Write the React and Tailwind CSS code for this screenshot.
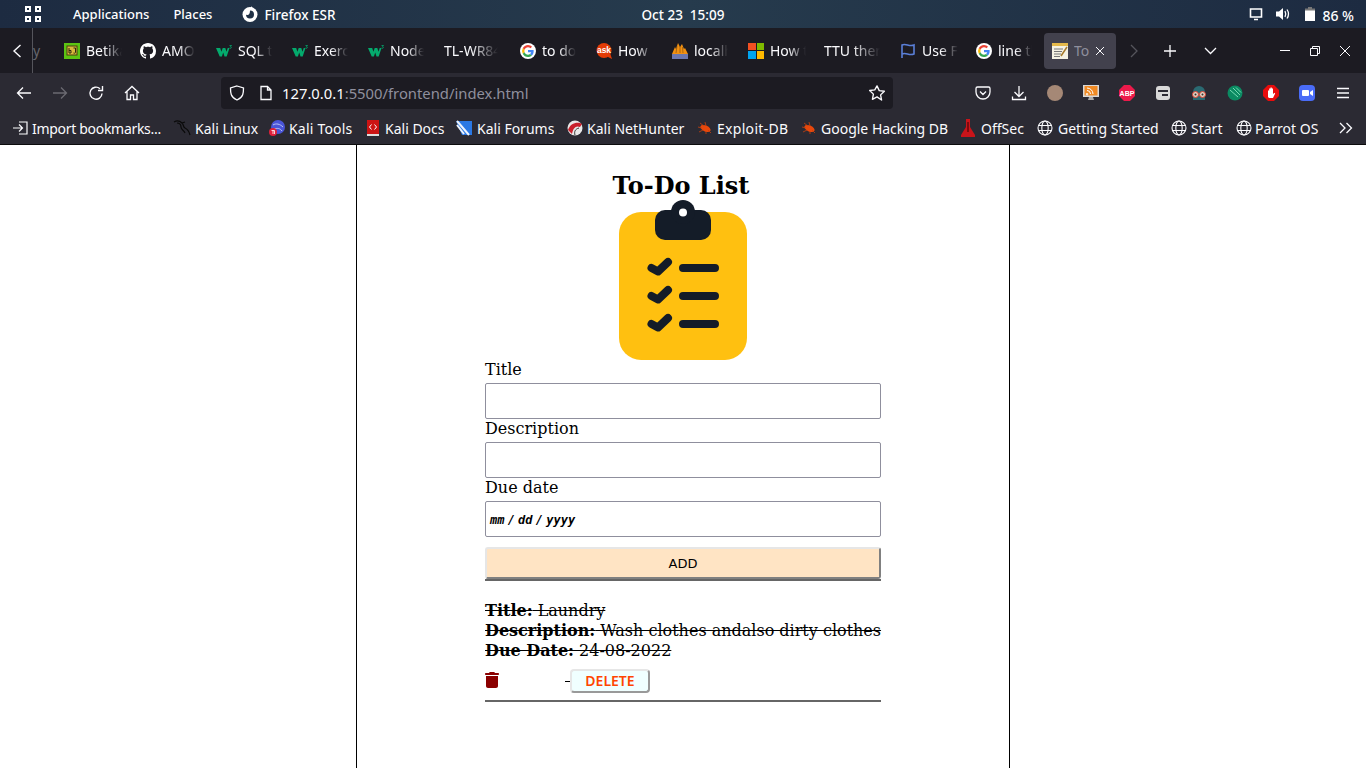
import React from "react";

const G = () => (
  <svg width="16" height="16" viewBox="0 0 48 48" className="shrink-0">
    <circle cx="24" cy="24" r="24" fill="#fff" />
    <path fill="#EA4335" d="M24 13c3 0 5.300 1 7.200 2.800l4.800-4.800C33 8.200 28.900 6 24 6 17 6 11 10 8.200 16l5.600 4.300C15.200 16 19.200 13 24 13z" />
    <path fill="#4285F4" d="M41 24.500c0-1.300-.1-2.300-.3-3.500H24v6.700h9.600c-.4 2.300-1.700 4.200-3.700 5.500l5.500 4.300C38.900 34 41 29.700 41 24.500z" />
    <path fill="#FBBC05" d="M13.800 27.700a10.800 10.800 0 0 1 0-7.400L8.200 16a18 18 0 0 0 0 16z" />
    <path fill="#34A853" d="M24 42c4.900 0 8.900-1.600 11.400-4.500l-5.500-4.300c-1.500 1-3.400 1.800-5.900 1.800-4.800 0-8.800-3-10.200-7.300L8.200 32C11 38 17 42 24 42z" />
  </svg>
);
const W3 = () => (
  <svg width="16" height="12" viewBox="0 0 16 12" className="shrink-0">
    <path fill="#04AA6D" d="M0 3h4.200l1.200 3.800L6.700 3h2.600l1.200 3.800L11.700 3H13.500l-2.800 8.500H8.500L7.200 7.500 5.900 11.500H3.700z" />
    <path fill="none" stroke="#04AA6D" strokeWidth=".8" d="M13.500.5H15.500L14.500 1.800c1 0 1.200 1.200 0 1.500-.5 0-1-.2-1-.5" />
  </svg>
);
const Github = () => (
  <svg width="16" height="16" viewBox="0 0 16 16" fill="#fff" className="shrink-0">
    <path d="M8 0C3.580 0 0 3.580 0 8c0 3.540 2.290 6.530 5.470 7.590.4.070.55-.17.55-.38 0-.19-.01-.82-.01-1.490-2.010.37-2.530-.49-2.690-.94-.09-.23-.48-.94-.82-1.130-.28-.15-.68-.52-.01-.53.63-.01 1.080.58 1.230.82.72 1.210 1.870.87 2.330.66.070-.52.28-.87.510-1.070-1.780-.2-3.640-.89-3.640-3.950 0-.87.310-1.590.82-2.150-.08-.2-.36-1.020.08-2.120 0 0 .67-.21 2.200.82.64-.18 1.320-.27 2-.27s1.360.09 2 .27c1.530-1.040 2.200-.82 2.200-.82.44 1.100.16 1.920.08 2.120.51.560.82 1.270.82 2.150 0 3.070-1.870 3.750-3.650 3.950.290.25.540.73.540 1.480 0 1.070-.01 1.930-.01 2.200 0 .210.15.460.55.380A8.010 8.010 0 0 0 16 8c0-4.420-3.580-8-8-8z" />
  </svg>
);
const Boot = () => (
  <svg width="16" height="16" viewBox="0 0 16 16" className="shrink-0">
    <rect width="16" height="16" fill="#5cc412" />
    <rect x="3" y="3" width="10" height="9" fill="#d9b93c" stroke="#4a3d10" />
    <path d="M5 5v5h2V7.500H5M9.500 5h2v4.500c0 .8-1 .8-2 .5" stroke="#2d2a10" fill="none" />
  </svg>
);
const Ask = () => (
  <svg width="16" height="16" viewBox="0 0 16 16" className="shrink-0">
    <circle cx="8" cy="7.500" r="7.500" fill="#e33c06" />
    <path fill="#e33c06" d="M10 13l6 3-2-6z" />
    <text x="8" y="10" textAnchor="middle" fontSize="8.500" fontWeight="700" fill="#fff" fontFamily="Liberation Sans">ask</text>
  </svg>
);
const Pma = () => (
  <svg width="16" height="16" viewBox="0 0 16 16" className="shrink-0">
    <path fill="#f29111" d="M0 11 3 4l1 2 2-6 2 4 2-3 2 5 1-1 3 6z" />
    <path stroke="#7a4a10" strokeWidth=".6" d="M4 10 5 3M8 10V3M11 10 10.500 4" />
    <path fill="#6c78af" d="M0 11h16v5H0z" />
  </svg>
);
const Ms = () => (
  <span className="w-4 h-4 shrink-0 grid grid-cols-2 gap-px">
    <span className="bg-[#f25022]" />
    <span className="bg-[#7fba00]" />
    <span className="bg-[#00a4ef]" />
    <span className="bg-[#ffb900]" />
  </span>
);
const Flag = () => (
  <svg width="16" height="16" viewBox="0 0 16 16" fill="none" stroke="#5a7fd8" strokeWidth="1.600" className="shrink-0">
    <path d="M2 15V2c4-2 7 2 12 0v9c-5 2-8-2-12 0" />
  </svg>
);
const Note = () => (
  <svg width="16" height="16" viewBox="0 0 16 16" className="shrink-0">
    <rect width="16" height="16" fill="#f5f2e3" />
    <rect width="16" height="3" fill="#e5b94a" />
    <path stroke="#777" d="M2 6h9M2 8.500h8M2 11h7M2 13.500h6" />
    <path stroke="#a77b2c" strokeWidth="1.500" d="M15 4l-6 9" />
  </svg>
);

const Tab = ({ icon, label, width = "w-[36px]", gap = "gap-[6px]" }) => (
  <div className={`w-[76px] shrink-0 flex items-center ${gap} text-[14px] text-[#fbfbfe] overflow-hidden`}>
    {icon}
    <span className={`${width} overflow-hidden whitespace-nowrap [mask-image:linear-gradient(to_right,#000_50%,transparent)]`}>{label}</span>
  </div>
);

const Globe = () => (
  <svg width="16" height="16" viewBox="0 0 16 16" fill="none" stroke="#fbfbfe" strokeWidth="1.100" className="shrink-0">
    <circle cx="8" cy="8" r="7" />
    <ellipse cx="8" cy="8" rx="3.200" ry="7" />
    <path d="M1.500 5.500h13M1.500 10.500h13" />
  </svg>
);
const Dragon = () => (
  <svg width="18" height="16" viewBox="0 0 18 16" fill="none" stroke="#0a0a0a" strokeWidth="1.200" className="shrink-0">
    <path d="M1 2c3-2 6-1 8 1s1 4 3 5 4 3 5 7M4 3c2 0 4 1 4 4s3 3 4 6M9 3l3-1" />
  </svg>
);
const KaliTools = () => (
  <svg width="16" height="16" viewBox="0 0 16 16" className="shrink-0">
    <circle cx="9" cy="7" r="7" fill="#4a55d8" />
    <path d="M4 5c3-2 7-1 10 2M5 9c3-1 6-1 8 2" stroke="#b9c3f5" fill="none" />
    <circle cx="4" cy="12" r="4" fill="#e0203a" />
    <path d="M2.500 10.500h3v3.500M4 10.500V14" stroke="#fff" strokeWidth=".8" fill="none" />
  </svg>
);
const KaliDocs = () => (
  <svg width="14" height="16" viewBox="0 0 14 16" className="shrink-0">
    <rect x="1" width="12" height="14" fill="#cc1414" />
    <rect x="1" y="14" width="12" height="2" fill="#ddd" />
    <path d="M5.500 4.500 3.500 7l2 2.500M8.500 4.500l2 2.500-2 2.500" stroke="#fff" fill="none" />
  </svg>
);
const KaliForums = () => (
  <svg width="16" height="16" viewBox="0 0 16 16" className="shrink-0">
    <path d="M0 1h16v14H6z" fill="#2a78e4" />
    <path d="M1 1 13 15M1 5l7 9" stroke="#eef3fb" strokeWidth="2" />
  </svg>
);
const NetHunter = () => (
  <svg width="16" height="16" viewBox="0 0 16 16" className="shrink-0">
    <circle cx="8" cy="8" r="7.500" fill="#e8e8e8" />
    <path d="M1 10C3 3 11 1 15 4l-2 3C9 5 6 8 5 14z" fill="#c8202c" />
    <path d="M8 15c-1-3 0-6 4-7" stroke="#333" fill="none" />
  </svg>
);
const Bug = () => (
  <svg width="16" height="14" viewBox="0 0 16 14" className="shrink-0">
    <ellipse cx="8.500" cy="7.500" rx="5.500" ry="3" fill="#e8480c" transform="rotate(25 8.500 7.500)" />
    <path d="M1 6l4 1M3 2l4 3M8 1l1 4M2 11l4-2M14 12l-3-3M9 13l0-3" stroke="#c8400c" strokeWidth=".8" />
  </svg>
);
const OffSec = () => (
  <svg width="14" height="18" viewBox="0 0 14 18" className="shrink-0">
    <path d="M5 0h4v8l5 8v2H0v-2l5-8z" fill="#c9141a" />
    <path d="M6.500 3h1v10h-1z" fill="#300" />
  </svg>
);

const Bookmark = ({ icon, label, box, w, track = "" }) => (
  <div className={`flex items-center shrink-0 text-[14px] text-[#fbfbfe] whitespace-nowrap ${w}`}>
    <span className={`${box} shrink-0 flex items-center`}>{icon}</span>
    <span className={track}>{label}</span>
  </div>
);

const Clipboard = () => (
  <svg width="150" height="160" viewBox="0 0 150 160" className="block">
    <rect x="11" y="12" width="128" height="148" rx="22" fill="#ffc010" />
    <rect x="47" y="10" width="56" height="30" rx="10" fill="#141c28" />
    <circle cx="75" cy="12" r="12" fill="#141c28" />
    <circle cx="75" cy="12.500" r="4" fill="#fff" />
    <g fill="none" stroke="#141c28" strokeLinecap="round" strokeLinejoin="round" strokeWidth="8">
      <path d="M43.500 68 50 71.500 60 62" />
      <path d="M43.500 96 50 99.500 60 90" />
      <path d="M43.500 124 50 127.500 60 118" />
      <path d="M75 68h32M75 96h32M75 124h32" />
    </g>
  </svg>
);

const Label = ({ children }) => <div className="h-[19px] leading-[19px] mb-[4px]">{children}</div>;
const Field = ({ children }) => (
  <div className="h-[36px] border border-[#8f8f9d] rounded-[2px] bg-white flex items-center px-[4px]">{children}</div>
);

export default function App() {
  return (
    <div className="w-[1366px] h-[768px] overflow-hidden bg-white flex flex-col font-['Noto_Sans',sans-serif]">
      {/* desktop panel */}
      <div className="h-[28px] shrink-0 pt-[2px] bg-gradient-to-r from-[#1d2b41] via-[#263b4d] to-[#1d2b41] flex items-center text-white text-[13.5px] font-medium">
        <div className="ml-[25px] w-4 h-4 grid grid-cols-2 gap-[4px] mt-[-2px]">
          <span className="border-2 border-white" />
          <span className="border-2 border-white" />
          <span className="border-2 border-white" />
          <span className="border-2 border-white" />
        </div>
        <span className="ml-[32px] text-[13px]">Applications</span>
        <span className="ml-[24px] text-[13px]">Places</span>
        <svg width="16" height="16" viewBox="0 0 16 16" className="ml-[30px] mt-[-2px]">
          <circle cx="8" cy="8.500" r="7.500" fill="#fff" />
          <path d="M8 4.500a4 4 0 1 1-4 4C6 10 8 8.500 8 4.500z" fill="#1f3045" />
          <path d="M9 0c1 2 3 3 4 4L9 4z" fill="#fff" />
        </svg>
        <span className="ml-[6px]">Firefox ESR</span>
        <span className="ml-[306px] whitespace-pre">Oct 23  15:09</span>
        <div className="ml-auto flex items-center">
          <svg width="14" height="14" viewBox="0 0 14 14" fill="none" stroke="#fff" strokeWidth="2" className="mt-[-2px]">
            <path d="M1.500 2h11v8h-11zM5 12.500h4" strokeWidth="1.600" />
          </svg>
          <svg width="16" height="16" viewBox="0 0 16 16" className="ml-[12px] mt-[-2px]">
            <path d="M1 5.500h3L8 2v12L4 10.500H1z" fill="#fff" />
            <path d="M10 5c1 2 1 4 0 6M12 3.500c2 3 2 6 0 9" stroke="#fff" fill="none" strokeWidth="1.300" />
          </svg>
          <svg width="10" height="14" viewBox="0 0 10 14" className="ml-[14px] mt-[-2px]">
            <path d="M3 0h4v1.500h3V14H0V1.500h3z" fill="#777" />
            <path d="M0 3.500h10V14H0z" fill="#fff" />
          </svg>
          <span className="ml-[7px] mr-[12px] text-[14px]">86 %</span>
        </div>
      </div>

      {/* tabs */}
      <div className="h-[45px] shrink-0 bg-[#1c1b22] flex items-center">
        <div className="w-[33px] h-full shrink-0 flex items-center border-r border-[#55555c]">
          <svg width="10" height="14" viewBox="0 0 10 14" fill="none" stroke="#fbfbfe" strokeWidth="1.400" className="ml-[12px]">
            <path d="M8.500 1 2 7l6.500 6" />
          </svg>
        </div>
        <span className="w-[31px] text-[14px] text-[#66666c] shrink-0">y</span>
        <div className="flex items-center">
          <Tab icon={<Boot />} label="Betika" />
          <Tab icon={<Github />} label="AMO" width="w-[33px]" />
          <Tab icon={<W3 />} label="SQL tutorial" width="w-[34px]" />
          <Tab icon={<W3 />} label="Exercise" width="w-[34px]" />
          <Tab icon={<W3 />} label="Node" width="w-[34px]" />
          <Tab icon={null} label="TL-WR841" width="w-[54px]" gap="gap-0" />
          <Tab icon={<G />} label="to do" width="w-[34px]" />
          <Tab icon={<Ask />} label="How" />
          <Tab icon={<Pma />} label="localhost" width="w-[34px]" />
          <Tab icon={<Ms />} label="How to" />
          <Tab icon={null} label="TTU there" width="w-[56px]" gap="gap-0" />
          <Tab icon={<Flag />} label="Use Font" />
          <Tab icon={<G />} label="line through" width="w-[34px]" />
        </div>
        <div className="ml-[-8px] w-[72px] h-[36px] bg-[#42414d] rounded-[4px] flex items-center pl-[8px] shrink-0 text-[14px] text-[#8f8f9d]">
          <Note />
          <span className="ml-[6px] w-[16px] overflow-hidden">To</span>
          <svg width="10" height="10" viewBox="0 0 10 10" stroke="#fbfbfe" className="ml-[5px]"><path d="M1 1l8 8M9 1l-8 8" /></svg>
        </div>
        <svg width="8" height="14" viewBox="0 0 8 14" fill="none" stroke="#55555c" strokeWidth="1.300" className="ml-[14px]"><path d="M1 1l6 6-6 6" /></svg>
        <svg width="12" height="12" viewBox="0 0 12 12" stroke="#fbfbfe" strokeWidth="1.300" className="ml-[26px]"><path d="M6 0v12M0 6h12" /></svg>
        <svg width="13" height="8" viewBox="0 0 13 8" fill="none" stroke="#fbfbfe" strokeWidth="1.300" className="ml-[28px]"><path d="M1 1l5.500 5.500L12 1" /></svg>
        <div className="ml-auto flex items-center">
          <span className="w-[10px] h-px bg-[#fbfbfe]" />
          <svg width="10" height="10" viewBox="0 0 10 10" fill="none" stroke="#fbfbfe" className="ml-[20px]"><path d="M.5 2.500h7v7h-7zM2.500 2.500v-2h7v7h-2" /></svg>
          <svg width="10" height="10" viewBox="0 0 10 10" stroke="#fbfbfe" className="ml-[20px] mr-[16px]"><path d="M0 0l10 10M10 0 0 10" /></svg>
        </div>
      </div>

      {/* nav */}
      <div className="h-[40px] shrink-0 bg-[#2b2a33] flex items-center">
        <svg width="16" height="16" viewBox="0 0 16 16" fill="none" stroke="#fbfbfe" strokeWidth="1.300" className="ml-[16px]"><path d="M15 8H1.500M7 2.500 1.500 8 7 13.500" /></svg>
        <svg width="16" height="16" viewBox="0 0 16 16" fill="none" stroke="#6b6a72" strokeWidth="1.300" className="ml-[20px]"><path d="M1 8h13.500M9 2.500 14.500 8 9 13.500" /></svg>
        <svg width="16" height="16" viewBox="0 0 16 16" fill="none" stroke="#fbfbfe" strokeWidth="1.400" className="ml-[20px]"><path d="M14 8.500A6 6 0 1 1 12 3.700M10 5.500h4.500V1" /></svg>
        <svg width="16" height="16" viewBox="0 0 16 16" fill="none" stroke="#fbfbfe" strokeWidth="1.300" className="ml-[20px]"><path d="M1 8 8 1.500 15 8M3 6.500V14.500h3.500V10h3v4.500H13V6.500" /></svg>
        <div className="ml-[81px] w-[672px] h-[32px] rounded-[4px] bg-[#1c1b22] flex items-center text-[14.8px] shrink-0">
          <svg width="16" height="16" viewBox="0 0 16 16" fill="none" stroke="#fbfbfe" strokeWidth="1.300" className="ml-[8px]"><path d="M8 1 14.500 3c0 5 0 9-6.500 12C1.500 12 1.500 8 1.500 3z" /></svg>
          <svg width="14" height="16" viewBox="0 0 14 16" fill="none" stroke="#fbfbfe" strokeWidth="1.300" className="ml-[14px]"><path d="M2 1.500h6.500L12 5v9.500H2zM8.500 1.500V5H12" /></svg>
          <span className="ml-[9px] text-[#fbfbfe]">127.0.0.1<span className="text-[#8f8f9d]">:5500/frontend/index.html</span></span>
          <svg width="18" height="18" viewBox="0 0 24 24" fill="none" stroke="#fbfbfe" strokeWidth="1.800" strokeLinejoin="round" className="ml-auto mr-[7px]"><path d="M12 2.500l3 6.300 6.800.9-5 4.800 1.300 6.900L12 17.100l-6.100 3.300 1.300-6.900-5-4.800 6.800-.9z" /></svg>
        </div>
        <div className="ml-[82px] flex items-center">
          <svg width="16" height="16" viewBox="0 0 16 16" fill="none" stroke="#fbfbfe" strokeWidth="1.300"><path d="M2.500 2h11A1.500 1.500 0 0 1 15 3.500V7a7 7 0 0 1-14 0V3.500A1.500 1.500 0 0 1 2.500 2zM5 6.500l3 3 3-3" /></svg>
          <svg width="16" height="16" viewBox="0 0 16 16" fill="none" stroke="#fbfbfe" strokeWidth="1.300" className="ml-[20px]"><path d="M8 1v10M3.500 7 8 11.500 12.500 7M1.500 11.500v3h13v-3" /></svg>
          <span className="ml-[20px] w-4 h-4 rounded-full bg-[#a58876]" />
          <svg width="16" height="16" viewBox="0 0 16 16" className="ml-[20px]">
            <rect width="16" height="12" fill="#d8d8d8" /><rect x="1.500" y="1" width="13" height="9.500" fill="#f08a24" />
            <path d="M4 8.500a.8.8 0 1 0 .1 0M4 5.500a3.500 3.500 0 0 1 3.500 3.500M4 3a6 6 0 0 1 6 6" stroke="#fff" fill="none" /><path d="M6 12h4l1 3H5z" fill="#aaa" />
          </svg>
          <svg width="16" height="16" viewBox="0 0 16 16" className="ml-[20px]">
            <path d="M5 0h6l5 5v6l-5 5H5l-5-5V5z" fill="#ec1a4b" />
            <text x="8" y="10.800" textAnchor="middle" fontSize="7" fontWeight="700" fill="#fff" fontFamily="Liberation Sans">ABP</text>
          </svg>
          <span className="ml-[21px] w-[14px] h-[14px] rounded-[3px] bg-[#d9d9d9] flex flex-col justify-center gap-[2px] px-[2px]">
            <span className="h-[2px] bg-[#2b2a33]" /><span className="h-[2px] w-[6px] ml-auto bg-[#2b2a33]" />
          </span>
          <svg width="16" height="16" viewBox="0 0 16 16" className="ml-[21px]">
            <path d="M2 7a6 6 0 0 1 12 0v8H2z" fill="#2a6a72" />
            <circle cx="4.500" cy="9.500" r="3" fill="#e0d0c0" stroke="#e04030" /><circle cx="11.500" cy="9.500" r="3" fill="#e0d0c0" stroke="#e04030" />
            <circle cx="4.500" cy="9.500" r="1" fill="#333" /><circle cx="11.500" cy="9.500" r="1" fill="#333" />
          </svg>
          <svg width="16" height="16" viewBox="0 0 16 16" className="ml-[20px]">
            <circle cx="8" cy="8" r="7.500" fill="#0b8a62" />
            <path d="M3 5l8 7M6 3l7 7M9 2.500l5 5" stroke="#8ff0c8" fill="none" strokeWidth=".8" />
          </svg>
          <svg width="16" height="16" viewBox="0 0 16 16" className="ml-[20px]">
            <path d="M5 0h6l5 5v6l-5 5H5l-5-5V5z" fill="#e80c0c" />
            <path d="M5 12V5.500h1.200V8V3.500h1.300V8V2.500H8.800V8V3.500H10v5.500l1.500-1.200.7.700L10 13H6z" fill="#fff" />
          </svg>
          <span className="ml-[20px] w-4 h-4 rounded-[4px] bg-[#4a6cf7] flex items-center justify-center gap-px">
            <span className="w-[7px] h-[6px] bg-white rounded-[1px]" />
            <svg width="3" height="6" viewBox="0 0 3 6"><path d="M0 2l3-2v6L0 4z" fill="#fff" /></svg>
          </span>
          <svg width="14" height="12" viewBox="0 0 14 12" stroke="#fbfbfe" strokeWidth="1.300" className="ml-[21px]"><path d="M1 1.500h12M1 6h12M1 10.500h12" /></svg>
        </div>
      </div>

      {/* bookmarks */}
      <div className="h-[32px] shrink-0 bg-[#2b2a33] border-b border-[#0c0c0d] flex items-center pl-[13px] pb-[1px]">
        <Bookmark w="w-[160px]" box="w-[19px]" track="tracking-[-0.3px]" icon={<svg width="15" height="14" viewBox="0 0 15 14" fill="none" stroke="#fbfbfe" strokeWidth="1.200"><path d="M6 1h8v12H6M0 7h9M6 3.500 9.500 7 6 10.500" /></svg>} label="Import bookmarks..." />
        <Bookmark w="w-[96px]" box="w-[22px]" icon={<Dragon />} label="Kali Linux" />
        <Bookmark w="w-[97px]" box="w-[20px]" track="tracking-[0.2px]" icon={<KaliTools />} label="Kali Tools" />
        <Bookmark w="w-[90px]" box="w-[19px]" icon={<KaliDocs />} label="Kali Docs" />
        <Bookmark w="w-[111px]" box="w-[21px]" icon={<KaliForums />} label="Kali Forums" />
        <Bookmark w="w-[130px]" box="w-[20px]" icon={<NetHunter />} label="Kali NetHunter" />
        <Bookmark w="w-[104px]" box="w-[20px]" track="tracking-[0.3px]" icon={<Bug />} label="Exploit-DB" />
        <Bookmark w="w-[160px]" box="w-[20px]" icon={<Bug />} label="Google Hacking DB" />
        <Bookmark w="w-[76px]" box="w-[20px]" icon={<OffSec />} label="OffSec" />
        <Bookmark w="w-[134px]" box="w-[21px]" icon={<Globe />} label="Getting Started" />
        <Bookmark w="w-[65px]" box="w-[20px]" icon={<Globe />} label="Start" />
        <Bookmark w="w-[103px]" box="w-[19px]" icon={<Globe />} label="Parrot OS" />
        <svg width="14" height="12" viewBox="0 0 14 12" fill="none" stroke="#fbfbfe" strokeWidth="1.300"><path d="M1 1l5 5-5 5M7.500 1l5 5-5 5" /></svg>
      </div>

      {/* page */}
      <div className="flex-1 flex justify-center font-['DejaVu_Serif',serif] text-black text-[16px]">
        <div className="w-[654px] border-x border-black flex flex-col items-center">
          <div className="w-[396px]">
            <h1 className="text-[24px] font-bold leading-[28px] mt-[27px] text-center pr-[4px]">To-Do List</h1>
            <div className="flex justify-center"><Clipboard /></div>
            <Label>Title</Label>
            <Field />
            <Label>Description</Label>
            <Field />
            <Label>Due date</Label>
            <Field>
              <span className="font-['DejaVu_Sans_Mono',monospace] text-[12px] font-bold italic whitespace-pre [word-spacing:-4px] pt-[1px]">mm / dd / yyyy</span>
            </Field>
            <div className="mt-[10px] h-[32px] pt-[2px] bg-[#ffe4c4] border-2 border-t-[#e6e6e6] border-l-[#e6e6e6] border-r-[#808080] border-b-[#808080] rounded-[3px] flex items-center justify-center font-['DejaVu_Sans',sans-serif] text-[13px] font-normal">ADD</div>
            <div className="h-[2px] bg-[#666]" />
            <div className="mt-[20px] leading-[20px] line-through whitespace-nowrap">
              <div><b>Title:</b> Laundry</div>
              <div><b>Description:</b> Wash clothes andalso dirty clothes</div>
              <div><b>Due Date:</b> 24-08-2022</div>
            </div>
            <div className="mt-[6px] h-[27px] flex items-center">
              <svg width="14" height="16" viewBox="0 0 448 512" fill="#8b0000" className="shrink-0 mb-[2px]"><path d="M135 18C141 7 152 0 164 0h120c12 0 23 7 29 18l7 14h96c18 0 32 14 32 32s-14 32-32 32H32C14 96 0 82 0 64s14-32 32-32h96zM32 128h384v320c0 35-29 64-64 64H96c-35 0-64-29-64-64z" /></svg>
              <span className="ml-[66px] w-[5px] h-px bg-black mt-[2px]" />
              <div className="w-[80px] h-[24px] bg-[#f0ffff] border-2 border-t-[#e6e6e6] border-l-[#e6e6e6] border-r-[#999] border-b-[#999] rounded-[4px] flex items-center justify-center font-['Noto_Sans',sans-serif] text-[14px] font-semibold text-[#ff4500]">DELETE</div>
            </div>
            <div className="mt-[6px] h-[2px] bg-[#666]" />
          </div>
        </div>
      </div>
    </div>
  );
}
